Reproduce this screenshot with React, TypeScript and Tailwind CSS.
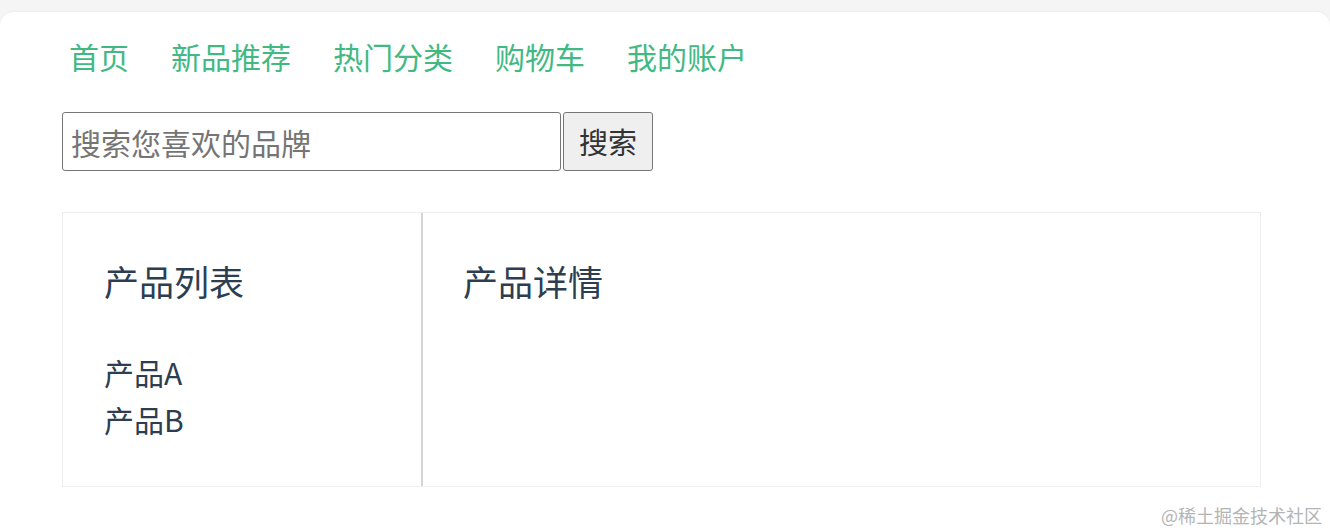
const cjk = "font-['Noto_Sans_CJK_SC','Noto_Sans',sans-serif]"

const navItems = ['首页', '新品推荐', '热门分类', '购物车', '我的账户']

export default function App() {
    return (
        <div className={`relative h-[532px] w-[1330px] overflow-hidden bg-[#f5f5f5] pt-[12px] ${cjk}`}>
            <div className="h-full rounded-t-[14px] bg-white shadow-[0_-1px_2px_rgba(0,0,0,0.04)] pl-[62px]">
                <nav className="flex gap-[42px] pl-[7px] pt-[23px] text-[30px] leading-[42px] text-[#42b983]">
                    {navItems.map((item) => (
                        <a key={item} href="#">
                            {item}
                        </a>
                    ))}
                </nav>
                <div className="mt-[35px] flex gap-[2px]">
                    <input
                        type="text"
                        placeholder="搜索您喜欢的品牌"
                        className="h-[59px] w-[499px] rounded-[3px] border border-[#767676] px-[8px] text-[30px] text-[#2c3e50] placeholder:text-[#757575] outline-none"
                    />
                    <button className="h-[59px] w-[90px] rounded-[3px] border border-[#767676] bg-[#efefef] text-[29px] text-[#333]">
                        搜索
                    </button>
                </div>
                <div className="mt-[41px] flex h-[275px] w-[1199px] border border-[#eeeeee] text-[#2c3e50]">
                    <div className="w-[358px] px-[41px] pt-[45px]">
                        <h3 className="text-[35px] leading-[46px]">产品列表</h3>
                        <ul className="mt-[45px] text-[30px] leading-[47px]">
                            <li>产品A</li>
                            <li>产品B</li>
                        </ul>
                    </div>
                    <div className="flex-1 border-l-2 border-[#d4d4d4] px-[40px] pt-[45px]">
                        <h3 className="text-[35px] leading-[46px]">产品详情</h3>
                    </div>
                </div>
            </div>
            <div className="absolute bottom-[5px] right-[8px] text-[18px] leading-[24px] text-[#b4b4b4]">
                @稀土掘金技术社区
            </div>
        </div>
    )
}
